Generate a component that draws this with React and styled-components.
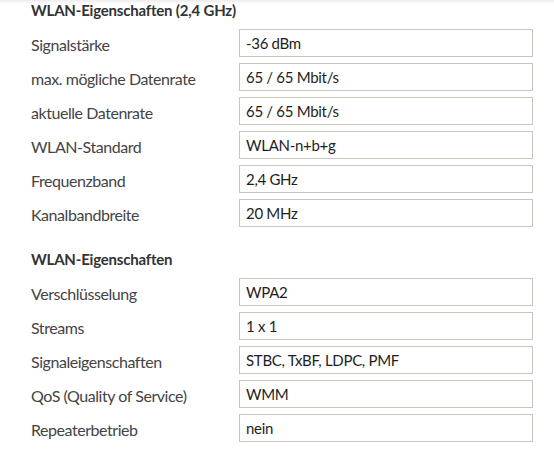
import styled, { createGlobalStyle } from 'styled-components'

const GlobalStyle = createGlobalStyle`
  html, body {
    margin: 0;
    padding: 0;
    background: #ffffff;
  }
  body {
    font-family: Lato, "Liberation Sans", sans-serif;
    color: #3a3a3a;
  }
`

const Page = styled.div`
  width: 554px;
  height: 458px;
  overflow: hidden;
  padding-left: 31px;
  box-sizing: border-box;
  background: linear-gradient(to bottom, #ececec 0px, #ffffff 4px);
`

const Section = styled.section`
  display: flex;
  flex-direction: column;
  gap: 6px;
  margin-top: ${(p) => (p.$first ? '0' : '22px')};
`

const Heading = styled.h3`
  margin: 0 0 3px;
  height: 20px;
  line-height: 20px;
  font-size: 15px;
  font-weight: 700;
  letter-spacing: -0.2px;
  color: #333333;
`

const Row = styled.div`
  display: grid;
  grid-template-columns: 208px 294px;
  align-items: center;
  height: 28px;
`

const Label = styled.span`
  font-size: 16px;
  letter-spacing: -0.45px;
  color: #444444;
  padding-top: 2px;
`

const Value = styled.div`
  box-sizing: border-box;
  height: 28px;
  border: 1px solid #c6c6bf;
  padding: 0 6px;
  display: flex;
  align-items: center;
  font-size: 15px;
  letter-spacing: -0.3px;
  color: #1e1e1e;
`

const radio = [
  ['Signalstärke', '-36 dBm'],
  ['max. mögliche Datenrate', '65 / 65 Mbit/s'],
  ['aktuelle Datenrate', '65 / 65 Mbit/s'],
  ['WLAN-Standard', 'WLAN-n+b+g'],
  ['Frequenzband', '2,4 GHz'],
  ['Kanalbandbreite', '20 MHz'],
]

const props = [
  ['Verschlüsselung', 'WPA2'],
  ['Streams', '1 x 1'],
  ['Signaleigenschaften', 'STBC, TxBF, LDPC, PMF'],
  ['QoS (Quality of Service)', 'WMM'],
  ['Repeaterbetrieb', 'nein'],
]

const App = () => {
  return (
    <>
      <GlobalStyle />
      <Page>
        <Section $first>
          <Heading>WLAN-Eigenschaften (2,4 GHz)</Heading>
          {radio.map(([label, value]) => (
            <Row key={label}>
              <Label>{label}</Label>
              <Value>{value}</Value>
            </Row>
          ))}
        </Section>
        <Section>
          <Heading>WLAN-Eigenschaften</Heading>
          {props.map(([label, value]) => (
            <Row key={label}>
              <Label>{label}</Label>
              <Value>{value}</Value>
            </Row>
          ))}
        </Section>
      </Page>
    </>
  )
}

export default App
